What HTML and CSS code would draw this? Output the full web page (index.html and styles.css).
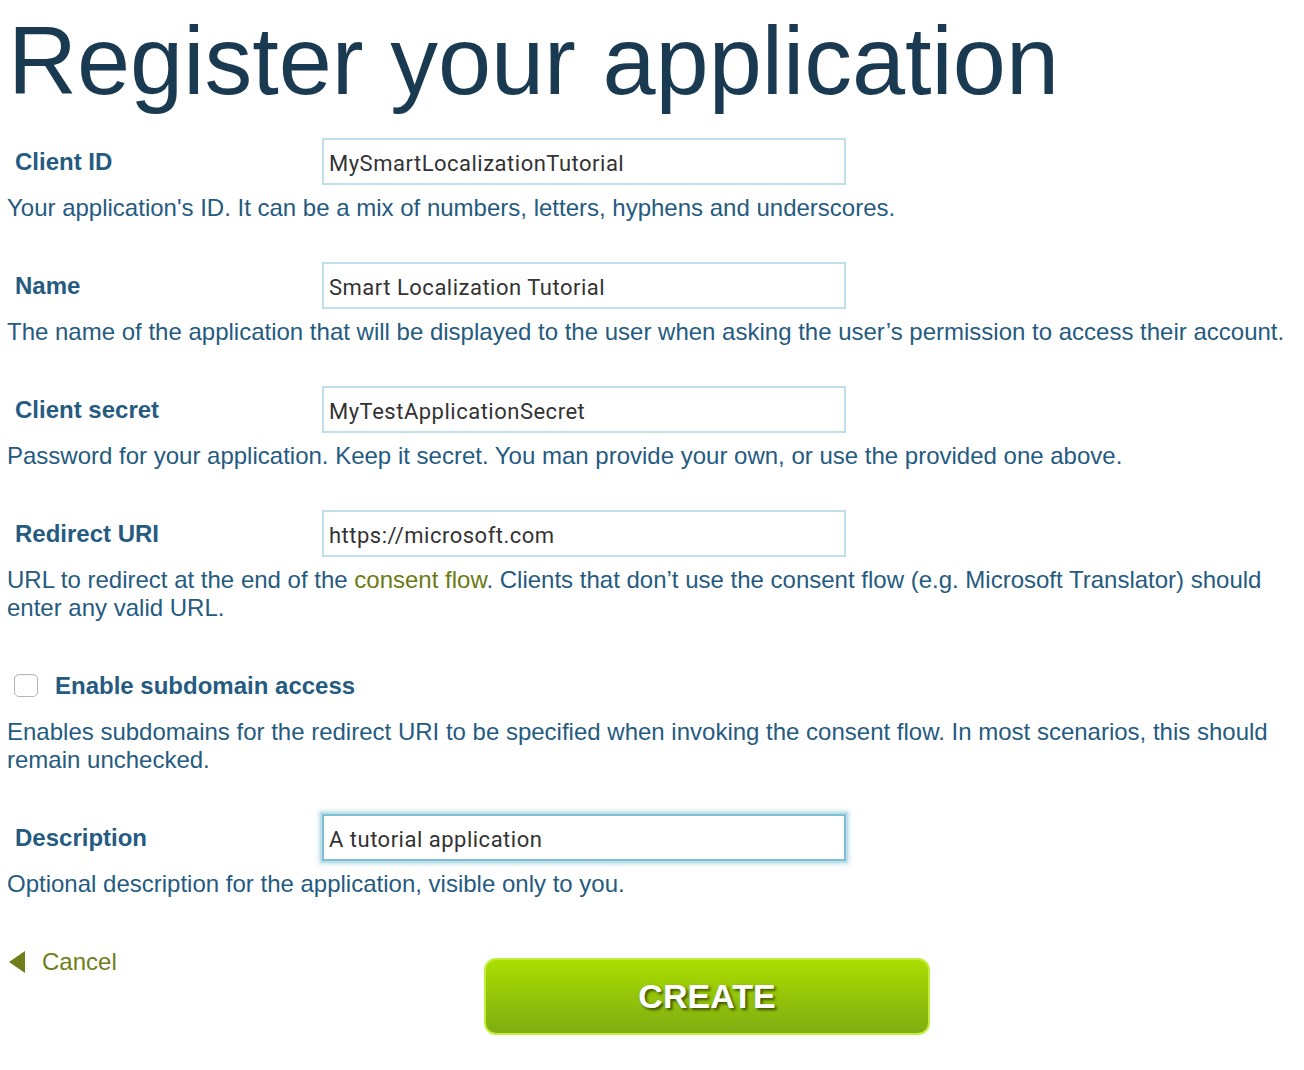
FILE: index.html
```html
<!DOCTYPE html>
<html>
<head>
<meta charset="utf-8">
<link rel="stylesheet" href="styles.css">
</head>
<body>
<div class="page">
  <h1 class="title">Register your application</h1>

  <div class="field">
    <div class="row">
      <label class="label">Client ID</label>
      <div class="input">MySmartLocalizationTutorial</div>
    </div>
    <p class="desc">Your application's ID. It can be a mix of numbers, letters, hyphens and underscores.</p>
  </div>

  <div class="field">
    <div class="row">
      <label class="label">Name</label>
      <div class="input">Smart Localization Tutorial</div>
    </div>
    <p class="desc">The name of the application that will be displayed to the user when asking the user’s permission to access their account.</p>
  </div>

  <div class="field">
    <div class="row">
      <label class="label">Client secret</label>
      <div class="input">MyTestApplicationSecret</div>
    </div>
    <p class="desc">Password for your application. Keep it secret. You man provide your own, or use the provided one above.</p>
  </div>

  <div class="field">
    <div class="row">
      <label class="label">Redirect URI</label>
      <div class="input">https://microsoft.com</div>
    </div>
    <p class="desc">URL to redirect at the end of the <a class="link" href="#">consent flow</a>. Clients that don’t use the consent flow (e.g. Microsoft Translator) should enter any valid URL.</p>
  </div>

  <div class="field">
    <div class="row">
      <span class="checkbox"></span>
      <label class="label check-label">Enable subdomain access</label>
    </div>
    <p class="desc">Enables subdomains for the redirect URI to be specified when invoking the consent flow. In most scenarios, this should remain unchecked.</p>
  </div>

  <div class="field">
    <div class="row">
      <label class="label">Description</label>
      <div class="input focused">A tutorial application</div>
    </div>
    <p class="desc">Optional description for the application, visible only to you.</p>
  </div>

  <div class="actions">
    <a class="cancel" href="#"><span class="arrow"></span>Cancel</a>
    <button class="create">CREATE</button>
  </div>
</div>
</body>
</html>
```

FILE: styles.css
```css
* { box-sizing: border-box; }
html, body { margin: 0; padding: 0; background: #fff; }
body { font-family: "Liberation Sans", Arial, sans-serif; }
.page { padding: 0 0 0 7px; width: 1304px; }
.title {
  margin: 0;
  padding-top: 8px;
  padding-left: 1px;
  font-weight: normal;
  font-size: 95.5px;
  line-height: 106px;
  color: #1a3a52;
  height: 138px;
}
.field { margin-bottom: 40px; }
.row { display: flex; align-items: center; height: 47px; }
.label {
  width: 315px;
  padding-left: 8px;
  font-weight: bold;
  font-size: 24px;
  color: #255b80;
}
.input {
  width: 524px;
  height: 47px;
  border: 2px solid #bfe0ea;
  padding: 3px 5px 0;
  display: flex;
  align-items: center;
  font-family: Roboto, "Noto Sans", sans-serif;
  font-size: 22px;
  letter-spacing: 0.5px;
  color: #333;
}
.input.focused {
  border: 2px solid #7dbfd1;
  box-shadow: 0 0 0 2px #bde0ea, 0 0 4px 3px rgba(125,191,209,0.5);
}
.desc {
  margin: 9px 0 0;
  font-size: 24px;
  line-height: 28px;
  color: #255b80;
}
.link { color: #6b7a13; text-decoration: none; }
.checkbox {
  width: 24px;
  height: 23px;
  margin-left: 7px;
  border: 1px solid #b5b5b5;
  border-radius: 5px;
  background: #fff;
  box-shadow: inset 0 1px 1px rgba(0,0,0,0.05);
}
.check-label { width: auto; padding-left: 17px; }
.actions {
  display: flex;
  align-items: flex-start;
  padding-top: 2px;
}
.cancel {
  display: flex;
  align-items: center;
  width: 477px;
  height: 44px;
  font-size: 24px;
  color: #6f7d1a;
  text-decoration: none;
}
.arrow {
  width: 0; height: 0;
  border-top: 11px solid transparent;
  border-bottom: 11px solid transparent;
  border-right: 16px solid #6f7d1a;
  margin: 0 17px 0 2px;
}
.create {
  width: 446px;
  height: 77px;
  margin-top: 18px;
  border: 2px solid #c2ee3c;
  border-radius: 12px;
  background: linear-gradient(#abdd00, #7ead12);
  color: #fff;
  font-family: "Liberation Sans", Arial, sans-serif;
  font-weight: bold;
  font-size: 34px;
  text-shadow: 2px 2px 3px rgba(0,0,0,0.6);
  padding: 0;
}
```
